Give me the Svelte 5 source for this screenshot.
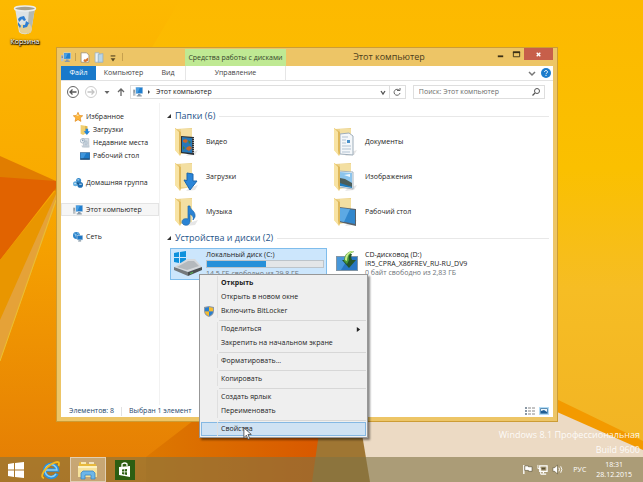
<script>
  let query = $state('');
  let folderState = $state(true);
  let driveState = $state(true);

  const tree = [
    { icon: 'star', label: 'Избранное', children: [
      { icon: 'downloads', label: 'Загрузки' },
      { icon: 'recent', label: 'Недавние места' },
      { icon: 'desktop', label: 'Рабочий стол' }
    ] },
    { icon: 'homegroup', label: 'Домашняя группа' },
    { icon: 'pc', label: 'Этот компьютер', active: true },
    { icon: 'network', label: 'Сеть' }
  ];

  const folders = [
    { kind: 'video', label: 'Видео' },
    { kind: 'docs', label: 'Документы' },
    { kind: 'down', label: 'Загрузки' },
    { kind: 'pics', label: 'Изображения' },
    { kind: 'music', label: 'Музыка' },
    { kind: 'desk', label: 'Рабочий стол' }
  ];

  const menu = [
    [
      { label: 'Открыть', bold: true },
      { label: 'Открыть в новом окне' },
      { label: 'Включить BitLocker', shield: true }
    ],
    [{ label: 'Поделиться', sub: true }, { label: 'Закрепить на начальном экране' }],
    [{ label: 'Форматировать...' }],
    [{ label: 'Копировать' }],
    [{ label: 'Создать ярлык' }, { label: 'Переименовать' }],
    [{ label: 'Свойства', hover: true }]
  ];

  const drive = { label: 'Локальный диск (C:)', used: 51, free: '14,5 ГБ свободно из 29,8 ГБ' };
</script>

{#snippet smallIcon(name)}
  <svg class="ico" viewBox="0 0 16 16" aria-hidden="true">
    {#if name === 'pc'}
      <path d="M0 4h4v10H0z" fill="#b9c0c6" /><path d="M1 6h2M1 8h2" stroke="#59636d" />
      <path d="M4 0h12v11H4z" fill="#c3d5e4" /><path d="M5 1h10v9H5z" fill="#1f7fd0" /><path d="M5 1h6l-4 9H5z" fill="#4ba0e3" />
      <path d="M8 11h4v2h2v2H6v-2h2z" fill="#8b99a6" />
    {:else if name === 'star'}
      <path d="M8 .5l2.200 5 5.300.5-4 3.600 1.200 5.400L8 12.200 3.300 15l1.200-5.400L.5 6l5.300-.5z" fill="#fdb53a" stroke="#df8412" />
      <path d="M8 3l1.200 3.500H5z" fill="#ffe29a" />
    {:else if name === 'downloads'}
      <path d="M1 0l7 1v13l-3 2-4-2z" fill="#f0cf70" /><path d="M8 1l4 1v11l-4 1z" fill="#dfb850" />
      <path d="M9 6h4v4h3l-5 6-5-6h3z" fill="#2385d8" />
    {:else if name === 'recent'}
      <path d="M4 1h10v13H6z" fill="#dde4ea" stroke="#a5b1bc" /><path d="M7 5h5M7 8h6M7 11h5" stroke="#7f97ae" />
      <circle cx="4" cy="4.500" r="3.500" fill="#eef3f7" stroke="#8ba0b3" /><path d="M4 2.500v2h2" fill="none" stroke="#4c6d8d" />
      <path d="M2 12h13v3H4z" fill="#c1ccd5" />
    {:else if name === 'desktop'}
      <path d="M0 2h16v12H0z" fill="#3a6b9a" /><path d="M1 3h14v10H1z" fill="#1e7ac7" /><path d="M1 3h9l-5 9H1z" fill="#3f96dc" />
      <path d="M1 12h14v1.500H1z" fill="#21405e" />
    {:else if name === 'homegroup'}
      <circle cx="9" cy="4" r="4" fill="#2f86c9" /><circle cx="4" cy="9" r="4" fill="#63aee0" /><circle cx="11.500" cy="11" r="4.500" fill="#1f6fb4" />
      <path d="M7 3h3M2 9h3M10 10h4" stroke="#d5ecfa" stroke-width="1.500" /><path d="M6 7l3 3" stroke="#174f80" stroke-width="2" />
    {:else if name === 'network'}
      <circle cx="5.500" cy="5.500" r="5.500" fill="#2c83cb" /><path d="M2 3l3 1-1 3M7 1l2 3" stroke="#9fd3f3" stroke-width="1.500" fill="none" />
      <path d="M6 5h10v8H6z" fill="#bfd3e3" /><path d="M7 6h8v6H7z" fill="#1e77c5" /><path d="M9 13h4v2H8z" fill="#7d8f9f" />
    {/if}
  </svg>
{/snippet}

{#snippet folderIcon(kind)}
  <svg class="folder" viewBox="0 0 26 30" aria-hidden="true">
    <path d="M16 26l9-3-3 5-9 1z" fill="#e6e6e6" />
    <path d="M3 2l16-1v24l-12 2z" fill="#ecd28a" />
    <path d="M8 2h11v23H8z" fill="#f3dfa2" />
    {#if kind === 'video'}
      <path d="M8 9l13 1v18L8 26z" fill="#2b3036" /><path d="M9 10l10 1v15l-10-1z" fill="#2678b8" />
      <path d="M10 13l3-1 2 2-2 2-3-1zM14 20l3-1 2 2-3 3-3-2z" fill="#c5682c" /><path d="M15 13l3 2-2 2zM10 19l2 2-2 2z" fill="#447d39" />
      <path d="M20.200 11v16" stroke="#d9dde0" stroke-dasharray="1 1" />
    {:else if kind === 'docs'}
      <path d="M8 7l9-1 4 3v19l-13-1z" fill="#f4f7fa" stroke="#9faebb" /><path d="M10 10h6M10 13h4M10 16h4M10 19h9M10 22h9M10 25h8" stroke="#b3c3d3" />
      <path d="M15 13h3v3h-3z" fill="#4a90ca" />
    {:else if kind === 'pics'}
      <path d="M7 9l14 1v17L7 25z" fill="#eff5fa" stroke="#a5b4c0" /><path d="M8 10l12 1v14L8 23z" fill="#8bc4ed" />
      <path d="M8 16l5 1 7 4v4L8 23z" fill="#4c5e5a" /><path d="M8 21l12 4v1L8 24z" fill="#1f7dc0" /><path d="M12 13l6-1v3z" fill="#eef8ff" />
    {:else if kind === 'desk'}
      <path d="M7 10l17 2v17L7 25z" fill="#596067" /><path d="M8 11l15 2v14L8 24z" fill="#3187cd" /><path d="M8 11l10 1-6 13-4-1z" fill="#5ca9e4" />
    {/if}
    <path d="M2 1l6 4v21l-1 3-5-6z" fill="#f6dd91" /><path d="M2 1l6 4v21l-1 3z" fill="#dfb85b" /><path d="M2 1l4 4v22l-4-4z" fill="#f8e3a3" />
    {#if kind === 'down'}
      <path d="M14 11l6 1v7h4l-7 9-6-10 3 .5z" fill="#2a85d8" stroke="#1c67ad" />
    {:else if kind === 'music'}
      <path d="M17 9c0 4 6 5 5 11l-2 3c1-3-1-5-3-6v7c0 6-8 5-8 1 0-3 3-4 6-3V9z" fill="#2a83d4" stroke="#1b68ad" stroke-width=".7" />
    {/if}
  </svg>
{/snippet}

<div class="desktop">
  <svg class="wallpaper" viewBox="0 0 643 482" preserveAspectRatio="none" aria-hidden="true">
    <defs>
      <linearGradient id="sky" x1="0" y1="0" x2="0" y2="1">
        <stop offset="0" stop-color="#fdb900" /><stop offset=".35" stop-color="#fac000" /><stop offset=".6" stop-color="#f6bd24" /><stop offset="1" stop-color="#f1b224" />
      </linearGradient>
      <linearGradient id="left" x1="0" y1="0" x2="0" y2="1">
        <stop offset="0" stop-color="#fdb900" /><stop offset=".4" stop-color="#f9a900" /><stop offset="1" stop-color="#e47c04" />
      </linearGradient>
      <linearGradient id="floor" x1="0" x2="1">
        <stop offset="0" stop-color="#dd7800" /><stop offset="1" stop-color="#d85800" />
      </linearGradient>
    </defs>
    <rect width="643" height="482" fill="url(#sky)" />
    <path d="M0 0h180L56 210v200h180v72H0z" fill="url(#left)" />
    <path d="M0 156l56 25v10L0 178z" fill="#e17d00" />
    <path d="M0 177l56 4v7L0 260z" fill="#e16300" />
    <path d="M56 190L0 260v101l56-160z" fill="#e99600" />
    <path d="M56 194L0 320v41l56-158z" fill="#e5a238" />
    <path d="M56 200L0 361" stroke="#ecc02e" />
    <path d="M146 457l52-40h122v65H146z" fill="url(#floor)" />
    <path d="M312 482l10-70h38l12 70z" fill="#9f7633" />
    <path d="M358 410h198l87 39v33H370z" fill="#ecdac4" />
    <path d="M548 395l95 46v9l-95-42z" fill="#f39a00" />
  </svg>

  <button class="shortcut">
    <svg viewBox="0 0 24 30" aria-hidden="true">
      <path d="M2 3l4 24c3 3 9 3 12 0l4-24z" fill="#dde3e5" /><path d="M16 5l6-2-4 24-4 2z" fill="#b3b9b3" />
      <ellipse cx="12" cy="3.500" rx="10.500" ry="2.500" fill="#a8a08a" stroke="#eceeed" stroke-width="1.500" />
      <path d="M5 20l12-1 2 5-1 3c-3 2-8 2-11 0z" fill="#e5cf94" />
      <path d="M7 12l4-1 2 4-2 1-2-2-3 3-1-3zM13 16l3 2-2 4-4 1v-3h2zM5 17l3 4-1 2-2-3z" fill="#2e7ed2" />
    </svg>
    <span>Корзина</span>
  </button>

  <section class="window" aria-label="Этот компьютер">
    <header class="titlebar">
      <div class="quick">
        {@render smallIcon('pc')}
        <i class="bar"></i>
        <button aria-label="Свойства">
          <svg viewBox="0 0 12 14"><path d="M1 1h7l3 3v9H1z" fill="#fff" stroke="#998c75" /><path d="M5 9l1 1 4-3v4l-4 2-2-2z" fill="#d87530" /></svg>
        </button>
        <button aria-label="Новая папка">
          <svg viewBox="0 0 12 14"><path d="M1 1h5v12H1z" fill="#e9f2f8" stroke="#9bb3c4" /><path d="M5 3l6-1v11H5z" fill="#b9d5e7" stroke="#93afc1" /></svg>
        </button>
        <button aria-label="Настройка панели">
          <svg viewBox="0 0 12 14"><path d="M3 5h6" stroke="#5b4a22" stroke-width="1.500" /><path d="M3 8h6l-3 4z" fill="#5b4a22" /></svg>
        </button>
        <i class="bar"></i>
      </div>
      <div class="context">Средства работы с дисками</div>
      <h1>Этот компьютер</h1>
      <div class="controls">
        <button aria-label="Свернуть"><svg viewBox="0 0 10 10"><path d="M2 7h6" stroke="#3b3015" stroke-width="2" /></svg></button>
        <button aria-label="Развернуть"><svg viewBox="0 0 10 10"><path d="M1.500 2.500h7v5h-7z" fill="none" stroke="#3b3015" /><path d="M1 2.500h8" stroke="#3b3015" stroke-width="2" /></svg></button>
        <button class="close" aria-label="Закрыть"><svg viewBox="0 0 10 10"><path d="M3 3l4 4M7 3L3 7" stroke="#fff" stroke-width="1.500" /></svg></button>
      </div>
    </header>

    <div class="body">
      <nav class="ribbon" aria-label="Лента">
        <button class="file">Файл</button>
        <button class="tab computer">Компьютер</button>
        <button class="tab view">Вид</button>
        <button class="tab manage">Управление</button>
        <span class="grow"></span>
        <button aria-label="Развернуть ленту"><svg viewBox="0 0 10 10"><path d="M2 4l3 3 3-3" fill="none" stroke="#777" stroke-width="1.500" /></svg></button>
        <button class="help" aria-label="Справка"><svg viewBox="0 0 10 10"><circle cx="5" cy="5" r="5" fill="#1c7ccc" /><path d="M3.500 4c0-2 3-2 3 0 0 1-1.500 1-1.500 2.200M5 7v1" fill="none" stroke="#fff" /></svg></button>
      </nav>

      <div class="navbar">
        <button class="round" aria-label="Назад"><svg viewBox="0 0 14 14"><circle cx="7" cy="7" r="5.500" fill="none" stroke="#666" /><path d="M10.500 7H4M6.500 4.500L4 7l2.500 2.500" fill="none" stroke="#555" stroke-width="1.300" /></svg></button>
        <button class="round" aria-label="Вперед"><svg viewBox="0 0 14 14"><circle cx="7" cy="7" r="5.500" fill="none" stroke="#ccc" /><path d="M3.500 7H10M7.500 4.500L10 7 7.500 9.500" fill="none" stroke="#c4c4c4" stroke-width="1.300" /></svg></button>
        <button aria-label="Последние места"><svg viewBox="0 0 10 10"><path d="M2.500 4h5l-2.500 3z" fill="#666" /></svg></button>
        <button aria-label="Вверх"><svg viewBox="0 0 10 10"><path d="M5 9V2M2 5l3-3 3 3" fill="none" stroke="#666" stroke-width="1.300" /></svg></button>
        <div class="address">
          {@render smallIcon('pc')}
          <svg class="step" viewBox="0 0 6 10" aria-hidden="true"><path d="M2 3l2 2-2 2z" fill="#444" /></svg>
          <button class="crumb">Этот компьютер</button>
          <span class="grow"></span>
          <button aria-label="Предыдущие расположения"><svg viewBox="0 0 10 10"><path d="M3 4l2 3 2-3" fill="none" stroke="#555" stroke-width="1.300" /></svg></button>
          <button class="refresh" aria-label="Обновить"><svg viewBox="0 0 10 10"><path d="M7.500 3.500A3 3 0 1 0 8 6M5 3.500h3V1" fill="none" stroke="#666" /></svg></button>
        </div>
        <div class="search">
          <input type="search" aria-label="Поиск" placeholder="Поиск: Этот компьютер" bind:value={query} />
          <svg viewBox="0 0 10 10" aria-hidden="true"><circle cx="6" cy="4" r="2.500" fill="none" stroke="#555" /><path d="M4 6L1.500 8.500" stroke="#555" stroke-width="1.300" /></svg>
        </div>
      </div>

      <div class="panes">
        <aside class="tree">
          {#each tree as group (group.label)}
            <div class="group">
              <button class="node" class:active={group.active}>{@render smallIcon(group.icon)}{group.label}</button>
              {#each group.children ?? [] as child (child.label)}
                <button class="node child">{@render smallIcon(child.icon)}{child.label}</button>
              {/each}
            </div>
          {/each}
        </aside>

        <main class="content">
          <h2>
            <button onclick={() => (folderState = !folderState)}><svg viewBox="0 0 6 6" aria-hidden="true"><path d="M5 1v4H1z" fill="#333" /></svg>Папки (6)</button>
          </h2>
          {#if folderState}
            <div class="grid">
              {#each folders as f (f.label)}
                <button class="tile">{@render folderIcon(f.kind)}<span>{f.label}</span></button>
              {/each}
            </div>
          {/if}

          <h2>
            <button onclick={() => (driveState = !driveState)}><svg viewBox="0 0 6 6" aria-hidden="true"><path d="M5 1v4H1z" fill="#333" /></svg>Устройства и диски (2)</button>
          </h2>
          {#if driveState}
            <div class="grid drives">
              <div class="drive selected">
                <svg class="disk" viewBox="0 0 30 26" aria-hidden="true">
                  <path d="M1 3l5-1v5H1zM7 2l6-1v6H7zM1 8h5v5l-5-1zM7 8h6v6l-6-1z" fill="#0d91dc" />
                  <path d="M1 17L14 9h8l7 8-14 5z" fill="#d6d9dc" /><path d="M4 17l11-6h6l5 5-12 4z" fill="#b4b9bd" />
                  <path d="M1 17l14 5v4L1 20z" fill="#75797c" /><path d="M15 22l14-5v3l-14 6z" fill="#4c5051" /><path d="M17 23l3-1v1l-3 1z" fill="#58c254" />
                </svg>
                <div class="info">
                  <span>{drive.label}</span>
                  <span class="meter"><i style="width: {drive.used}%"></i></span>
                  <span class="free">{drive.free}</span>
                </div>

                <div class="menu" role="menu">
                  {#each menu as section, i (i)}
                    <div class="section" role="group">
                      {#each section as item (item.label)}
                        <button role="menuitem" class:bold={item.bold} class:hover={item.hover}>
                          <span class="slot">
                            {#if item.shield}
                              <svg viewBox="0 0 10 11" aria-hidden="true">
                                <path d="M5 0l5 1v4c0 3-2 5-5 6-3-1-5-3-5-6V1z" fill="#8c98a5" />
                                <path d="M5 1v4.500H1V2z" fill="#2a7fce" /><path d="M5 1l4 1v3.500H5z" fill="#f5bb2c" />
                                <path d="M5 5.500V10C3 9 1 8 1 5.500z" fill="#f5bb2c" /><path d="M9 5.500C9 8 7 9 5 10V5.500z" fill="#2a7fce" />
                              </svg>
                            {/if}
                          </span>
                          <span class="text">{item.label}</span>
                          {#if item.sub}<svg class="sub" viewBox="0 0 6 8" aria-hidden="true"><path d="M1 1l4 3-4 3z" fill="#222" /></svg>{/if}
                        </button>
                      {/each}
                    </div>
                  {/each}
                  <svg class="cursor" viewBox="0 0 12 17" aria-hidden="true"><path d="M1 1v12l3-3 2 5 2-1-2-5h4z" fill="#fff" stroke="#444" /></svg>
                </div>
              </div>

              <div class="drive">
                <svg class="disk" viewBox="0 0 30 26" aria-hidden="true">
                  <path d="M4 6h22v15H4z" fill="#8195a6" /><path d="M5 7h20v13H5z" fill="#2776c4" /><path d="M5 7h12L9 20H5z" fill="#4797da" />
                  <path d="M10 10l7 8 7-8h-4c-1-2-1-4 0-6h-6l-1 6z" fill="#24552a" />
                  <path d="M21 1c-5 0-9 4-9 10l3 3 2-4c-1-4 1-7 5-8z" fill="#4d9c38" /><path d="M21 1c-5 0-8 4-8 9l2 1c0-5 2-8 6-9z" fill="#caec8e" />
                </svg>
                <div class="info">
                  <span>CD-дисковод (D:)</span>
                  <span>IR5_CPRA_X86FREV_RU-RU_DV9</span>
                  <span class="free">0 байт свободно из 2,83 ГБ</span>
                </div>
              </div>
            </div>
          {/if}
        </main>
      </div>

      <footer class="status">
        <span>Элементов: 8</span>
        <i></i>
        <span>Выбран 1 элемент</span>
        <span class="grow"></span>
        <button aria-label="Таблица"><svg viewBox="0 0 10 10"><path d="M0 1h2v2H0zM0 4h2v2H0zM0 7h2v2H0z" fill="#8a98a5" /><path d="M3 2h3M7 2h3M3 5h3M7 5h3M3 8h3M7 8h3" stroke="#888" /></svg></button>
        <button aria-label="Крупные значки"><svg viewBox="0 0 10 10"><path d="M0 1h10v8H0z" fill="#b4dcf5" /><path d="M1.500 2.500h7v5h-7z" fill="#eef6fb" stroke="#5b8fb7" /><path d="M2 5l3-1 3 2v1H2z" fill="#1f5d94" /></svg></button>
      </footer>
    </div>
  </section>

  <p class="watermark">Windows 8.1 Профессиональная<br />Build 9600</p>

  <footer class="taskbar">
    <button aria-label="Пуск"><svg viewBox="0 0 20 20"><path d="M2 4l6-1v6.500H2zM9 3l9-1v7.500H9zM2 10.500h6V17l-6-1zM9 10.500h9V18l-9-1z" fill="#fff" /></svg></button>
    <button aria-label="Internet Explorer">
      <svg viewBox="0 0 20 20">
        <path d="M16 13.500A6.500 6.500 0 1 1 16.500 10H5" fill="none" stroke="#2a91dd" stroke-width="3.500" /><path d="M15 14A6 6 0 1 1 16 10H5" fill="none" stroke="#8fd2f6" stroke-width="1.500" />
        <path d="M3 18c-4 0-1-7 4-11.500S18 1 18 3c0 1 0 2-.5 3" fill="none" stroke="#f5b81d" stroke-width="1.800" />
      </svg>
    </button>
    <button class="running" aria-label="Проводник">
      <svg viewBox="0 0 20 20">
        <path d="M1 3l1-1h6l1 2h9v5H1z" fill="#e7b93c" /><path d="M3 3h5M11 3h5" stroke="#fff6d5" stroke-width="1.500" /><path d="M0 6h19v11H0z" fill="#f7e29a" /><path d="M0 6h19v2H0z" fill="#fdf1c0" />
        <path d="M3 19v-6l2-2h10l2 2v6h-4v-4H7v4z" fill="#6db6e8" stroke="#3d87c0" stroke-width=".8" />
      </svg>
    </button>
    <button aria-label="Магазин">
      <svg viewBox="0 0 20 20">
        <path d="M0 0h20v20H0z" fill="#2d5e12" /><path d="M4 7l11-1v11L4 15z" fill="#fff" /><path d="M7 7V4q3-2 5 0v2" fill="none" stroke="#fff" stroke-width="1.300" />
        <path d="M7 9.500l2-.3v2.300H7zM9.600 9.200l2.400-.3v2.600H9.600zM7 12.200h2v2.200l-2-.3zM9.600 12.200H12V15l-2.400-.4z" fill="#2d5e12" />
      </svg>
    </button>
    <span class="grow"></span>
    <div class="tray">
      <button aria-label="Центр поддержки"><svg viewBox="0 0 12 12"><path d="M2 1v10" stroke="#fff" stroke-width="1.500" /><path d="M3 2h4v1h4v5H7V7H3z" fill="#fff" stroke="#5a5136" stroke-width=".7" /></svg></button>
      <button aria-label="Сеть"><svg viewBox="0 0 12 12"><path d="M3 2h8v6H3zM7 8v2M4 11h6" fill="none" stroke="#fff" stroke-width="1.400" /><path d="M1 1v4h3v6" fill="none" stroke="#fff" /><path d="M5 4h4v2H5z" fill="#5a5136" /></svg></button>
      <button aria-label="Громкость"><svg viewBox="0 0 12 12"><path d="M1 4h2l3-3v10L3 8H1z" fill="#fff" stroke="#5a5136" stroke-width=".6" /><path d="M7.500 4q1.500 2 0 4M9.500 2.500q2.500 3.500 0 7" fill="none" stroke="#fff" /></svg></button>
      <button class="lang">РУС</button>
      <button class="clock"><span>18:31</span><span>28.12.2015</span></button>
    </div>
  </footer>
</div>

<style>
  :global(body) { margin: 0; }
  .desktop {
    position: relative; display: flex; flex-direction: column; justify-content: space-between; min-height: 100vh;
    font: 7px/12px "Open Sans", "Noto Sans", sans-serif; color: #1b1b1b;
  }
  .desktop * { box-sizing: border-box; }
  button { display: flex; align-items: center; justify-content: center; padding: 0; border: 0; background: none; font: inherit; color: inherit; white-space: nowrap; }
  svg { display: block; flex: none; width: 10px; height: 10px; }
  h1, h2, p { margin: 0; font-weight: 400; }
  .grow { flex: 1; }
  .wallpaper { position: absolute; inset: 0; width: 100%; height: 100%; }

  .shortcut { position: relative; align-self: flex-start; flex-direction: column; width: 50px; padding-top: 5px; gap: 1px; color: #fff; text-shadow: 0 1px 1px #000, 0 0 2px #000, 1px 1px 1px #000; }
  .shortcut svg { width: 24px; height: 30px; }

  .window {
    position: absolute; top: 47px; right: 85px; bottom: 60px; left: 56px; display: flex; flex-direction: column;
    padding: 0 4px 4px; background: #edc566; border: 1px solid #cc9c35;
  }
  .titlebar { display: flex; height: 18px; }
  .quick { display: flex; align-items: center; width: 124px; gap: 4px; }
  .quick svg { width: 10px; height: 11px; }
  .bar { width: 1px; height: 8px; background: #c6a04e; }
  .context { width: 101px; margin-top: 1px; background: #bfe993; text-align: center; line-height: 17px; color: #36452b; white-space: nowrap; }
  h1 { flex: 1; font-size: 9px; line-height: 18px; text-align: center; color: #4a3c1c; }
  .controls { display: flex; align-items: flex-start; }
  .controls button { width: 16px; height: 12px; }
  .controls svg { width: 9px; height: 9px; }
  .controls .close { width: 29px; background: #c75f4a; }

  .body { flex: 1; display: flex; flex-direction: column; min-height: 0; background: #fff; }
  .ribbon { display: flex; height: 15px; border-bottom: 1px solid #e3e3e3; padding-right: 2px; color: #444; }
  .file { width: 35px; background: #1979ca; color: #fff; }
  .computer { width: 55px; }
  .view { width: 34px; }
  .manage { width: 101px; border: solid #e6e6e6; border-width: 0 1px; }
  .help { margin-left: 4px; }

  .navbar { display: flex; align-items: center; padding: 4px 8px 4px 5px; gap: 4px; }
  .navbar > button { width: 10px; }
  .navbar > .round { width: 14px; }
  .round svg { width: 14px; height: 14px; }
  .address, .search { display: flex; align-items: center; height: 14px; min-width: 0; border: 1px solid #dedede; }
  .address { flex: 69 1 0; padding-left: 2px; }
  .address .step { width: 6px; margin: 0 4px 0 3px; }
  .address .refresh { width: 16px; height: 12px; margin-left: 1px; border-left: 1px solid #dedede; }
  .search { flex: 31 1 0; margin-left: 3px; padding: 0 3px 0 5px; }
  .search input { flex: 1; min-width: 0; height: 12px; padding: 0; border: 0; outline: 0; background: none; font: inherit; }
  .search input::placeholder { color: #6d6d6d; opacity: 1; }

  .panes { flex: 1; display: flex; min-height: 0; }
  .tree { display: flex; flex-direction: column; gap: 14px; width: 99px; padding-top: 7px; border-right: 1px solid #f2f2f2; }
  .node { justify-content: flex-start; width: 100%; height: 13px; gap: 3px; padding-left: 12px; }
  .node.child { padding-left: 19px; }
  .node.active { background: #f6f6f6; box-shadow: inset 0 0 0 1px #e4e4e4; }

  .content { flex: 1; min-width: 0; padding: 6px 4px 0 6px; }
  h2 { display: flex; align-items: center; gap: 4px; font-size: 9px; line-height: 14px; color: #1e5389; }
  h2::after { content: ""; flex: 1; height: 1px; background: #e8e8e8; }
  h2 button { gap: 3px; }
  h2 svg { width: 6px; height: 6px; }
  .grid { display: grid; grid-template-columns: 159px 1fr; padding: 1px 0 2px 4px; }
  .tile { justify-content: flex-start; height: 35px; padding-left: 3px; gap: 7px; }
  .folder { width: 26px; height: 30px; }
  .drives { padding-top: 3px; }
  .drive { position: relative; display: flex; height: 32px; padding: 2px 3px; gap: 3px; }
  .selected { width: 157px; background: #cce6fc; box-shadow: inset 0 0 0 1px #7fbdec; }
  .disk { width: 30px; height: 26px; }
  .info { flex: 1; display: flex; flex-direction: column; line-height: 9px; white-space: nowrap; }
  .free { color: #6e7479; }
  .meter { height: 8px; margin: 1px 0; background: #e3e6e8; border: 1px solid #bcc4ca; }
  .meter i { display: block; height: 100%; background: #2690d9; }

  .menu { position: absolute; z-index: 2; top: 26px; left: 29px; width: 169px; padding: 1px; background: #efefef; border: 1px solid #979797; box-shadow: 2px 2px 2px rgba(0, 0, 0, .45); }
  .menu button { width: 100%; height: 14px; justify-content: flex-start; }
  .section + .section { margin-top: 1px; padding-top: 3px; position: relative; }
  .section + .section::before { content: ""; position: absolute; top: 1px; right: 0; left: 18px; height: 1px; background: #d7d7d7; }
  .slot { display: flex; align-items: center; justify-content: center; align-self: stretch; width: 17px; border-right: 1px solid #dfdfdf; }
  .slot svg { height: 11px; }
  .text { flex: 1; padding-left: 3px; text-align: left; }
  .sub { width: 5px; height: 7px; margin-right: 5px; }
  .bold { font-weight: 700; }
  .hover { background: #cfe2f3; box-shadow: inset 0 0 0 1px #85b8e3; }
  .cursor { position: absolute; right: 114px; bottom: -4px; width: 10px; height: 14px; }

  .status { display: flex; align-items: center; height: 12px; padding: 0 4px 0 8px; gap: 7px; color: #24466b; }
  .status i { width: 1px; height: 9px; background: #e2e2e2; }
  .status button + button { margin-left: -3px; }

  .watermark { position: absolute; right: 3px; bottom: 25px; font-size: 9px; line-height: 15px; text-align: right; color: rgba(255, 255, 255, .9); }

  .taskbar { position: relative; display: flex; align-items: stretch; height: 25px; padding: 0 4px 0 0; background: rgba(129, 115, 68, .6); color: #fff; }
  .taskbar > button { width: 36px; margin-right: 1px; }
  .taskbar > button:first-child { width: 32px; }
  .taskbar > button svg { width: 20px; height: 20px; }
  .taskbar .running { background: rgba(255, 255, 255, .35); box-shadow: inset 0 0 0 1px rgba(255, 255, 255, .45); }
  .tray { display: flex; align-items: center; gap: 4px; }
  .tray svg { width: 11px; height: 11px; }
  .lang { padding: 0 6px; }
  .clock { flex-direction: column; line-height: 10px; padding-right: 7px; }
</style>
